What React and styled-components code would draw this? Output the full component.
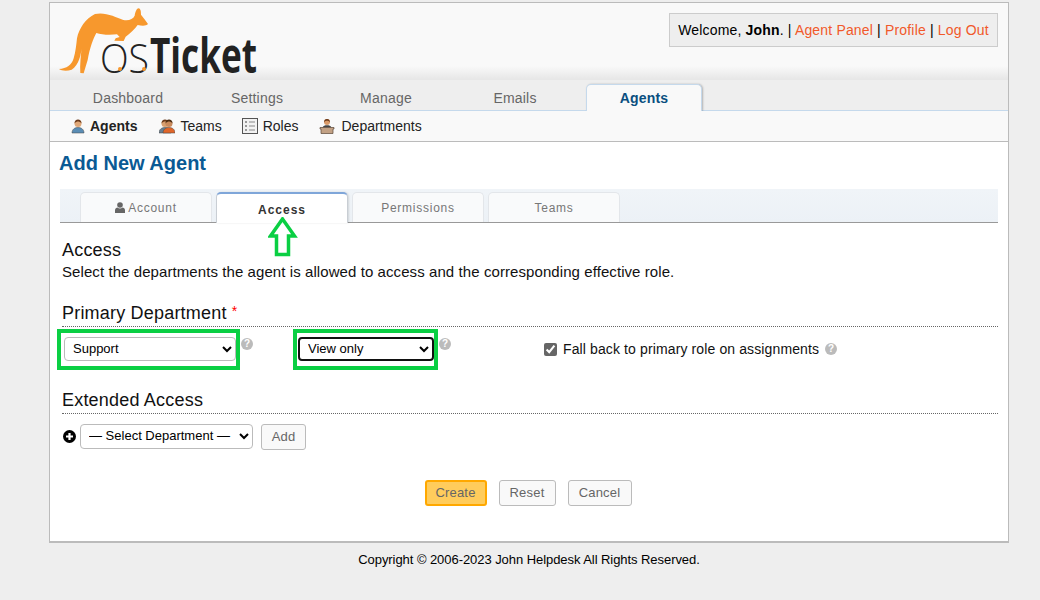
import React from "react";
import styled, { createGlobalStyle } from "styled-components";

const Global = createGlobalStyle`
  html, body { margin: 0; padding: 0; height: 600px; overflow: hidden; background: #eee; }
  body { font-family: "Liberation Sans", Arial, sans-serif; font-size: 14px; color: #000; }
`;
const Page = styled.div`
  width: 958px; height: 538px; margin: 2px 0 0 49px;
  display: flex; flex-direction: column;
  background: #fff;
  border: 1px solid #bbb; border-bottom: 2px solid #bbb;
`;
const Header = styled.header`
  height: 77px; flex: none; position: relative;
  display: flex; justify-content: space-between; align-items: flex-start;
  padding: 10px 10px 0 9px; box-sizing: border-box;
  background: linear-gradient(to bottom, #f9f9f9 0, #f9f9f9 82%, #e6e6e6 100%);
`;
const Logo = styled.svg`
  display: block; width: 210px; height: 75px; margin-top: -6px; overflow: visible;
`;
const Welcome = styled.div`
  width: 329px; height: 34px; box-sizing: border-box; flex: none;
  background: #eee; border: 1px solid #ccc;
  padding: 0 8px; line-height: 32px; text-align: center; white-space: nowrap;
  letter-spacing: .17px;
`;
const TopLink = styled.a` color: #f1592a; text-decoration: none; `;
const Nav = styled.nav`
  height: 31px; flex: none; box-sizing: border-box;
  background: #eee; border-bottom: 1px solid #c5d9ec;
  padding: 4px 0 0 20px;
  display: flex; gap: 13px;
`;
const NavTab = styled.a`
  width: 116px; height: 27px; box-sizing: border-box; flex: none;
  text-align: center; line-height: ${p => (p.$active ? "26px" : "28px")}; font-size: 14px; letter-spacing: .2px;
  color: ${p => (p.$active ? "#0a4f80" : "#666")};
  font-weight: ${p => (p.$active ? 700 : 400)};
  ${p => p.$active && `
    background: #f9f9f9;
    border: 1px solid #c5d9ec; border-bottom: none;
    border-radius: 5px 5px 0 0;
    box-shadow: 1px 0 2px rgba(0,0,0,.25);
  `}
`;
const SubNav = styled.div`
  height: 31px; flex: none; box-sizing: border-box;
  background: #f9f9f9; border-bottom: 1px solid #bbb;
  display: flex; align-items: center; padding: 0 0 0 21px;
`;
const SubItem = styled.a`
  display: flex; align-items: center; gap: ${p => p.$gap}px;
  margin-right: ${p => p.$mr}px;
  font-weight: ${p => (p.$active ? 700 : 400)};
  color: #222; font-size: 14px;
`;
const Content = styled.main`
  flex: 1; padding: 8px 10px 0; background: #fff; display: flex; flex-direction: column;
`;
const Title = styled.h1`
  margin: 0 0 0 -1px; font-size: 20px; line-height: 26px; font-weight: 700; color: #0a5a94;
`;
const Strip = styled.div`
  position: relative; margin-top: 13px; height: 34px; box-sizing: border-box;
  background: linear-gradient(to bottom, #f0f4f8, #ecf1f6);
  border-bottom: 1px solid #999;
  display: flex; align-items: flex-end; gap: 4px; padding-left: 20px;
`;
const FormTab = styled.div`
  width: 132px; box-sizing: border-box; margin-bottom: ${p => (p.$active ? "-1px" : "0")};
  height: ${p => (p.$active ? "31px" : "30px")};
  background: ${p => (p.$active ? "#fff" : "#f9fafb")};
  border: 1px solid #e3e6ea; border-bottom: none;
  ${p => p.$active && "border-top: 2px solid #7fa6d9; border-color: #7fa6d9 #c9ced4 #fff #c9ced4; box-shadow: 1px 0 2px rgba(0,0,0,.12);"}
  border-radius: 5px 5px 0 0;
  display: flex; align-items: center; justify-content: center; gap: 3px;
  font-size: 12px; letter-spacing: ${p => (p.$active ? "1px" : ".75px")};
  color: ${p => (p.$active ? "#333" : "#777")};
  font-weight: ${p => (p.$active ? 700 : 400)};
  padding-top: ${p => (p.$active ? "2px" : "0")};
`;
const Arrow = styled.svg`
  position: absolute; left: 208px; top: 28px; width: 30px; height: 40px;
`;
const Form = styled.form`
  margin: 0; padding: 17px 0 0 2px; display: flex; flex-direction: column;
`;
const Section = styled.h3`
  margin: 0; font-size: 18px; line-height: 20px; font-weight: 400; color: #111; letter-spacing: .2px;
`;
const Desc = styled.p`
  margin: 4px 0 0; font-size: 15px; line-height: 16px; color: #111; letter-spacing: .08px; white-space: nowrap;
`;
const SectionHead = styled.div`
  margin-top: ${p => p.$mt}px; padding-bottom: 3px;
  border-bottom: 1px dotted #666;
`;
const Required = styled.span` color: #f00; font-size: 14px; vertical-align: 3px; `;
const PrimaryRow = styled.div`
  display: grid; grid-template-columns: 236px 248px 1fr;
  margin: 2px 0 0 -5px; height: 41px;
`;
const Cell = styled.div` display: flex; align-items: flex-start; gap: ${p => p.$gap || 0}px; `;
const Highlight = styled.div`
  box-sizing: border-box; height: 41px; border: 4px solid #0acf43; flex: none;
  width: ${p => p.$w}px;
  padding: 4px 0 0 ${p => p.$pl}px;
`;
const Select = styled.select`
  display: block; box-sizing: border-box; height: ${p => p.$h || 24}px; width: ${p => p.$w}px;
  font-family: "Liberation Sans", Arial, sans-serif; font-size: 13px;
  color: #000; background: #fff; padding: 0 0 2px 4px;
  border: ${p => (p.$focus ? "2px solid #111" : "1px solid #bbb")};
  border-radius: 4px;
`;
const Help = styled.span`
  width: 12px; height: 12px; border-radius: 50%; background: #bbb; color: #fff;
  font-size: 10px; font-weight: 700; line-height: 12px; text-align: center; display: inline-block; flex: none;
  margin-top: ${p => p.$mt || 0}px; letter-spacing: 0;
`;
const Check = styled.label`
  display: flex; align-items: center; gap: 6px; margin: 12px 0 0 3px; font-size: 14px; color: #111;
  white-space: nowrap; letter-spacing: .12px;
`;
const CheckBox = styled.input`
  margin: 0; width: 13px; height: 13px; accent-color: #666; flex: none;
`;
const AddRow = styled.div`
  display: flex; align-items: flex-start; gap: 4px; margin: 10px 0 0 1px;
`;
const Button = styled.button`
  height: 26px; box-sizing: border-box; padding: 0 0 2px; width: ${p => p.$w}px;
  font-family: "Liberation Sans", Arial, sans-serif; font-size: 13px; letter-spacing: .2px;
  color: #666; background: ${p => (p.$primary ? "#ffcc5c" : "#f9f9f9")};
  border: ${p => (p.$primary ? "2px solid #ffa800" : "1px solid #bbb")};
  border-radius: 3px;
  margin-left: ${p => p.$ml || 0}px;
`;
const Actions = styled.div`
  display: flex; justify-content: center; gap: 12px; margin-top: 30px; padding-right: 4px;
`;
const Footer = styled.footer`
  width: 960px; margin: 9px 0 0 49px; text-align: center; font-size: 13px; letter-spacing: -.06px;
  line-height: 16px; color: #000;
`;

const Person = ({ skin, shirt, x = 0, hair = "#6b3a1a" }) => (
  <g transform={`translate(${x} 0)`}>
    <path d="M1 15c0-3.500 2.500-5.500 6-5.500s6 2 6 5.500z" fill={shirt} stroke="#444" strokeWidth=".5" />
    <circle cx="7" cy="5.500" r="3.500" fill={skin} />
    <path d="M3.500 5.500C3.500 3 5 1.500 7 1.500s3.500 1.500 3.500 4C9.500 4 8 3.500 7 3.500S4.500 4 3.500 5.500z" fill={hair} />
  </g>
);
const AgentIcon = () => (
  <svg width="14" height="16" viewBox="0 0 14 16"><Person skin="#e0a878" shirt="#5a8db5" /></svg>
);
const TeamIcon = () => (
  <svg width="16" height="16" viewBox="0 0 16 16">
    <Person skin="#d9a070" shirt="#6a7f90" x={-1} />
    <Person skin="#c98a5c" shirt="#e0662a" x={3} hair="#4a2c12" />
  </svg>
);
const RolesIcon = () => (
  <svg width="16" height="16" viewBox="0 0 16 16">
    <rect x=".5" y=".5" width="15" height="15" fill="#f2f2f2" stroke="#555" />
    <path d="M3 4h2M3 8h2M3 12h2" stroke="#999" strokeWidth="2" />
    <path d="M7 4h6M7 8h6M7 12h6" stroke="#888" />
  </svg>
);
const DeptIcon = () => (
  <svg width="16" height="16" viewBox="0 0 16 16">
    <circle cx="8" cy="4" r="3" fill="#d99a68" />
    <path d="M5 4.500C5 2 6.300 1 8 1s3 1 3 3.500C10 3 9 2.800 8 2.800S6 3 5 4.500z" fill="#6b3a1a" />
    <path d="M3.500 9.500C4 7.800 6 7.200 8 7.200s4 .6 4.500 2.300z" fill="#444" />
    <path d="M1 9.500h14v1.500h-1v4.500H2V11H1z" fill="#c2a184" stroke="#5a4636" strokeWidth=".7" />
  </svg>
);
const UserGlyph = () => (
  <svg width="10" height="11" viewBox="0 0 10 11">
    <circle cx="5" cy="3" r="2.800" fill="#666" />
    <path d="M0 11V8.200C0 6.500 1.500 5.500 2.500 5.500 3.300 6.200 4 6.500 5 6.500s1.700-.3 2.500-1C8.500 5.500 10 6.500 10 8.200V11z" fill="#666" />
  </svg>
);
const PlusCircle = () => (
  <svg width="13" height="13" viewBox="0 0 13 13" style={{ marginTop: 6, flex: "none" }}>
    <circle cx="6.500" cy="6.500" r="6.500" fill="#000" />
    <path d="M6.500 3v7M3 6.500h7" stroke="#fff" strokeWidth="2.200" />
  </svg>
);

export default function App() {
  return (
    <>
      <Global />
      <Page>
        <Header>
          <Logo viewBox="0 0 210 75">
            <g transform="translate(-4 -2) scale(.3333)" fill="#f7982d">
              <path d="M12 192C35 191 50 181 56 160 62 140 64 118 66 100 72 70 92 40 120 27 150 20 182 36 205 45 222 48 234 42 239 32 241 20 245 10 251 10 258 12 258 22 258 29L268 42 279 57C274 63 262 63 248 60 240 72 226 85 212 95L206 108 178 107 182 100 194 96 186 88C168 90 140 90 124 84 115 100 104 130 98 165L86 205 76 204C74 180 78 150 80 125 78 150 72 180 50 194 36 199 20 198 12 192z" />
            </g>
            <text x="41" y="66" fontFamily="'Open Sans', sans-serif" fontWeight="300" fontSize="40" fill="#222" textLength="49" lengthAdjust="spacingAndGlyphs">OS</text>
            <text x="91" y="66" fontFamily="'Open Sans', sans-serif" fontWeight="700" fontSize="49" fill="#222" textLength="107" lengthAdjust="spacingAndGlyphs">Ticket</text>
            <circle cx="61" cy="62" r="2" fill="#f7982d" />
            <circle cx="85" cy="62" r="2" fill="#f7982d" />
          </Logo>
          <Welcome>
            Welcome, <b>John</b>. | <TopLink>Agent Panel</TopLink> | <TopLink>Profile</TopLink> | <TopLink>Log Out</TopLink>
          </Welcome>
        </Header>
        <Nav>
          <NavTab>Dashboard</NavTab>
          <NavTab>Settings</NavTab>
          <NavTab>Manage</NavTab>
          <NavTab>Emails</NavTab>
          <NavTab $active>Agents</NavTab>
        </Nav>
        <SubNav>
          <SubItem $active $gap={5} $mr={22}><AgentIcon />Agents</SubItem>
          <SubItem $gap={5} $mr={20}><TeamIcon />Teams</SubItem>
          <SubItem $gap={5} $mr={21}><RolesIcon />Roles</SubItem>
          <SubItem $gap={6} $mr={0}><DeptIcon />Departments</SubItem>
        </SubNav>
        <Content>
          <Title>Add New Agent</Title>
          <Strip>
            <FormTab><UserGlyph />Account</FormTab>
            <FormTab $active>Access</FormTab>
            <FormTab>Permissions</FormTab>
            <FormTab>Teams</FormTab>
            <Arrow viewBox="0 0 30 40">
              <path d="M14.500 2L26.500 19H20.500V37.500H8.500V19H2.500z" fill="none" stroke="#0acf43" strokeWidth="3.500" />
            </Arrow>
          </Strip>
          <Form>
            <Section>Access</Section>
            <Desc>Select the departments the agent is allowed to access and the corresponding effective role.</Desc>
            <SectionHead $mt={21}><Section>Primary Department <Required>*</Required></Section></SectionHead>
            <PrimaryRow>
              <Cell $gap={1}>
                <Highlight $w={183} $pl={3}>
                  <Select $w={172} defaultValue="Support"><option>Support</option></Select>
                </Highlight>
                <Help $mt={9}>?</Help>
              </Cell>
              <Cell $gap={1}>
                <Highlight $w={145} $pl={1}>
                  <Select $w={136} $focus defaultValue="View only"><option>View only</option></Select>
                </Highlight>
                <Help $mt={9}>?</Help>
              </Cell>
              <Cell>
                <Check>
                  <CheckBox type="checkbox" defaultChecked readOnly />
                  Fall back to primary role on assignments
                  <Help>?</Help>
                </Check>
              </Cell>
            </PrimaryRow>
            <SectionHead $mt={20}><Section>Extended Access</Section></SectionHead>
            <AddRow>
              <PlusCircle />
              <Select $w={173} $h={25} defaultValue="x"><option value="x">— Select Department —</option></Select>
              <Button $w={45} $ml={4}>Add</Button>
            </AddRow>
            <Actions>
              <Button $primary $w={62}>Create</Button>
              <Button $w={57}>Reset</Button>
              <Button $w={64}>Cancel</Button>
            </Actions>
          </Form>
        </Content>
      </Page>
      <Footer>Copyright © 2006-2023 John Helpdesk All Rights Reserved.</Footer>
    </>
  );
}
